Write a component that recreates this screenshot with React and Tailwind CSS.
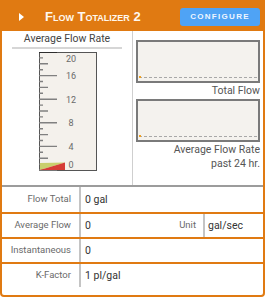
import React from 'react';

function Gauge() {
  // scale 0..20 mapped over the 118px tall face
  const h = 118;
  const unit = 5.9;
  const ticks = [];
  for (let v = 0; v <= 20; v++) {
    const y = h - v * unit;
    let len = 4;
    if (v % 4 === 0) len = 18;
    else if (v % 2 === 0) len = 9;
    ticks.push(<line key={v} x1="0" x2={len} y1={y} y2={y} stroke={v === 20 ? '#222' : '#808080'} strokeWidth="1.4" />);
  }
  const labels = [
    { v: 20, y: 10 },
    { v: 16, y: h - 16 * unit + 3.5 },
    { v: 12, y: h - 12 * unit + 3.5 },
    { v: 8, y: h - 8 * unit + 3.5 },
    { v: 4, y: h - 4 * unit + 3.5 },
    { v: 0, y: h - 2 },
  ];
  return (
    <svg width="58" height="119" viewBox="0 0 58 119" className="block">
      <rect x="0.5" y="0.5" width="57" height="118" fill="#f4f1ec" stroke="#555" strokeWidth="1" />
      {ticks}
      <polygon points="1,111 26,110.5 1,118" fill="#c9cf6c" />
      <polygon points="1,118 26,110.5 26,118" fill="#d63c36" />
      {labels.map((l) => (
        <text key={l.v} x="32" y={l.y} textAnchor="middle" fontSize="9" fill="#6a6a6a" fontFamily="Roboto, sans-serif">
          {l.v}
        </text>
      ))}
    </svg>
  );
}

function Chart() {
  return (
    <div className="relative h-[43px] border-2 border-[#7a7a7a] bg-[#f4f2ee]">
      <div className="absolute left-[1px] right-[1px] top-[35px] border-t border-dashed border-[#a8a8a8]" />
      <div className="absolute left-[1px] top-[34px] w-[2px] h-[2px] bg-[#f0a020]" />
    </div>
  );
}

function Row({ label, children, first }) {
  return (
    <div className={`flex h-[25px] items-center ${first ? '' : 'border-t-2 border-[#e07a12]'}`}>
      <div className="w-[79px] h-full flex items-center justify-end pr-[8px] text-[9.5px] text-[#6a6a6a] border-r-2 border-[#c4c4c4]">
        {label}
      </div>
      {children}
    </div>
  );
}

export default function App() {
  return (
    <div className="w-[265px] h-[297px] border-2 border-[#e07a12] rounded-b-[4px] bg-white flex flex-col overflow-hidden text-[10.5px] font-['Roboto',sans-serif]">
      {/* Header */}
      <div className="h-[29px] bg-[#e07a12] flex items-center shrink-0">
        <svg width="6" height="8" viewBox="0 0 6 8" className="ml-[17px] mt-[1px]">
          <polygon points="0,0 5,4 0,8" fill="#fff" />
        </svg>
        <span className="ml-[20px] text-[#fff8ee] font-bold text-[13px] [font-variant-caps:small-caps] font-['Liberation_Sans',sans-serif]">
          Flow Totalizer 2
        </span>
        <button className="ml-auto mr-[3px] mt-[1px] w-[80px] h-[18px] rounded-[3px] bg-[#4fa3f5] text-[#eef6ff] text-[8px] font-bold tracking-[1.3px] font-['Liberation_Sans',sans-serif] flex items-center justify-center">
          CONFIGURE
        </button>
      </div>

      {/* Gauge and charts */}
      <div className="flex h-[154px] shrink-0">
        <div className="w-[131px] border-r border-[#cfcfcf] flex flex-col">
          <div className="pt-[1px] leading-[14px] text-center text-[#444]">Average Flow Rate</div>
          <div className="mx-[10px] h-[2px] bg-[#d6d6d6] mt-[1px]" />
          <div className="ml-[37px] mt-[3px]">
            <Gauge />
          </div>
        </div>
        <div className="flex-1 pt-[9px] px-[3px] text-right text-[#555]">
          <Chart />
          <div className="mt-[1px] leading-[13px]">Total Flow</div>
          <div className="mt-[2px]">
            <Chart />
          </div>
          <div className="mt-[1px] leading-[14px]">
            Average Flow Rate
            <br />
            past 24 hr.
          </div>
        </div>
      </div>

      <div className="h-[2px] bg-[#9c9c9c] shrink-0" />

      {/* Table */}
      <div className="flex flex-col">
        <Row label="Flow Total" first>
          <div className="pl-[4px] text-[#333]">0 gal</div>
        </Row>
        <Row label="Average Flow">
          <div className="flex-1 h-full flex items-center pl-[4px] text-[#333]">0</div>
          <div className="h-full flex items-center pr-[7px] text-[9.5px] text-[#6a6a6a] border-r-2 border-[#c4c4c4]">Unit</div>
          <div className="w-[58px] pl-[3px] text-[#333]">gal/sec</div>
        </Row>
        <Row label="Instantaneous">
          <div className="pl-[4px] text-[#333]">0</div>
        </Row>
        <Row label="K-Factor">
          <div className="pl-[4px] text-[#333]">1 pl/gal</div>
        </Row>
      </div>
    </div>
  );
}
